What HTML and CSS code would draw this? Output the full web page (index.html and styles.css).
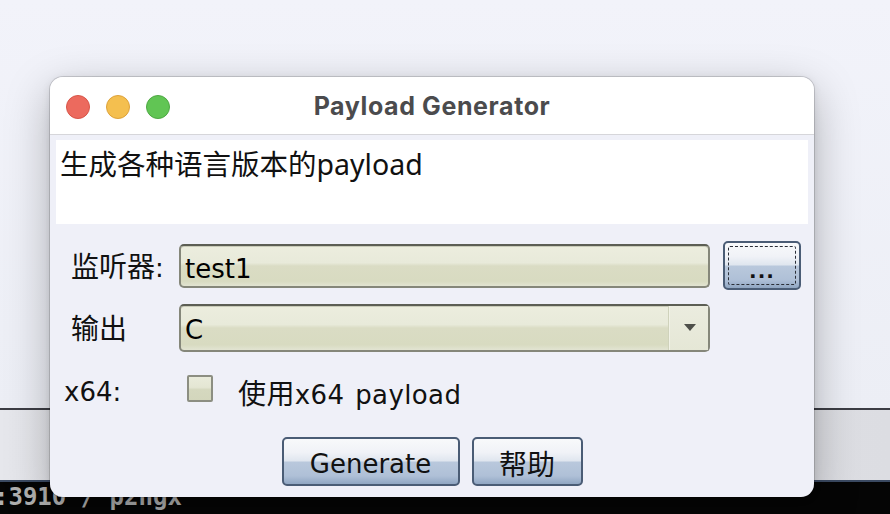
FILE: index.html
```html
<!DOCTYPE html>
<html lang="zh">
<head>
<meta charset="utf-8">
<title>Payload Generator</title>
<link rel="stylesheet" href="styles.css">
</head>
<body>
<div class="screen">
  <div class="desktop"></div>
  <div class="behind"></div>
  <div class="term"><span class="term-text">:3910 / p2ngx</span></div>

  <div class="dialog">
    <div class="titlebar">
      <div class="lights">
        <span class="light red"></span>
        <span class="light yellow"></span>
        <span class="light green"></span>
      </div>
      <div class="title">Payload Generator</div>
      <div></div>
    </div>
    <div class="content">
      <div class="desc">生成各种语言版本的payload</div>
      <div class="form">
        <div class="row row-listener">
          <span class="lbl"><span class="cjk">监听器</span>:</span>
          <div class="field text-field">test1</div>
          <button class="btn dots">...</button>
        </div>
        <div class="row row-output">
          <span class="lbl"><span class="cjk">输出</span></span>
          <div class="field combo">
            <span class="combo-value">C</span>
            <span class="combo-arrow"><span class="tri"></span></span>
          </div>
        </div>
        <div class="row row-x64">
          <span class="lbl-x64">x64:</span>
          <span class="check"></span>
          <span class="check-text"><span class="cjk">使用</span>x64 payload</span>
        </div>
        <div class="buttons">
          <button class="btn action gen">Generate</button>
          <button class="btn action help"><span class="cjk">帮助</span></button>
        </div>
      </div>
    </div>
  </div>
</div>
</body>
</html>
```

FILE: styles.css
```css
html, body {
  margin: 0;
  padding: 0;
}
body {
  width: 890px;
  height: 514px;
  overflow: hidden;
  font-family: "DejaVu Sans", "Noto Sans CJK SC", sans-serif;
}
.screen {
  position: relative;
  width: 890px;
  height: 514px;
  overflow: hidden;
  background: #f1f2f9;
}
.desktop {
  height: 408px;
  background: linear-gradient(to bottom, #f2f3fa 0%, #eceef5 100%);
}
.behind {
  height: 70px;
  border-top: 2px solid #3c3d44;
  border-bottom: 2px solid #3b4a62;
  background: linear-gradient(to right, #e6e7ec 0%, #dcdde2 100%);
}
.term {
  height: 32px;
  background: #050505;
  overflow: hidden;
}
.term-text {
  display: block;
  margin-left: -6px;
  font-family: "DejaVu Sans Mono", monospace;
  font-weight: bold;
  font-size: 24px;
  line-height: 30px;
  color: #b0b0b0;
  white-space: nowrap;
}

/* dialog window */
.dialog {
  position: absolute;
  left: 50px;
  top: 77px;
  width: 764px;
  height: 420px;
  border-radius: 13px;
  background: #eff0f8;
  overflow: hidden;
  box-shadow: 0 0 0 1px rgba(0, 0, 0, 0.14), 0 14px 45px rgba(0, 0, 0, 0.28), 0 2px 8px rgba(0, 0, 0, 0.10);
}
.titlebar {
  height: 57px;
  background: #ffffff;
  border-bottom: 1px solid #d6d6da;
  display: grid;
  grid-template-columns: 1fr auto 1fr;
  align-items: center;
}
.lights {
  display: flex;
  gap: 16px;
  padding-left: 16px;
  padding-top: 2px;
}
.light {
  width: 24px;
  height: 24px;
  border-radius: 50%;
  box-sizing: border-box;
}
.red { background: #ec6a5e; border: 1px solid #d85548; }
.yellow { background: #f4bf4f; border: 1px solid #dea23a; }
.green { background: #61c554; border: 1px solid #4ea843; }
.title {
  font-family: Inter, "DejaVu Sans", sans-serif;
  font-weight: 700;
  font-size: 25px;
  letter-spacing: 0.6px;
  color: #4b4b4d;
  padding-top: 1px;
}

.content {
  padding: 5px 6px 0 6px;
}
.desc {
  height: 84px;
  box-sizing: border-box;
  background: #ffffff;
  padding: 6px 0 0 4px;
  font-family: "Noto Sans", "Noto Sans CJK SC", sans-serif;
  font-size: 28.5px;
  line-height: 36px;
  color: #111;
}

.form {
  display: flex;
  flex-direction: column;
}
.row {
  display: flex;
  align-items: center;
  font-size: 26px;
  color: #111;
}
.cjk {
  font-family: "Noto Sans CJK SC", sans-serif;
  font-size: 28px;
}
.row-listener {
  margin-top: 17px;
  height: 49px;
  padding-left: 15px;
}
.row-output {
  margin-top: 13px;
  height: 49px;
  padding-left: 15px;
}
.lbl {
  width: 108px;
  flex: none;
  padding-top: 2px;
  line-height: 36px;
}

.field {
  box-sizing: border-box;
  border: 2px solid #85877a;
  border-top-color: #5c5e54;
  border-radius: 5px;
  background: linear-gradient(to bottom, #ecedde 0%, #e8eada 42%, #dadcc4 50%, #d8dbc1 88%, #e2e4d2 100%);
  box-shadow: inset 0 1px 0 #c9cbb8;
  display: flex;
  align-items: center;
}
.text-field {
  width: 531px;
  height: 44px;
  padding: 7px 0 0 4px;
  color: #000;
}
.dots {
  margin-left: 13px;
  width: 78px;
  height: 49px;
}
.combo {
  width: 531px;
  height: 48px;
  padding: 5px 0 0 4px;
  color: #000;
}
.combo-value {
  flex: 1;
}
.combo-arrow {
  align-self: stretch;
  margin-top: -5px;
  width: 38px;
  border-left: 1px solid #f1f2e6;
  box-shadow: -1px 0 0 #cfd2bb;
  background: linear-gradient(to bottom, #ebecdf 0%, #e5e7d6 100%);
  display: flex;
  align-items: center;
  justify-content: center;
}
.tri {
  width: 0;
  height: 0;
  border-left: 6px solid transparent;
  border-right: 6px solid transparent;
  border-top: 7px solid #4e4f4a;
  margin-left: 2px;
}

.row-x64 {
  margin-top: 23px;
  height: 34px;
  padding-left: 8px;
  align-items: flex-start;
  line-height: 34px;
}
.lbl-x64 {
  width: 123px;
  flex: none;
}
.check {
  width: 26px;
  height: 27px;
  box-sizing: border-box;
  border: 2px solid #8c8e82;
  border-radius: 2px;
  background: linear-gradient(to bottom, #e9ebdb 0%, #e4e6d3 45%, #d5d8bf 55%, #d3d6bc 100%);
  flex: none;
}
.check-text {
  margin-left: 25px;
  letter-spacing: 0.4px;
  word-spacing: 2px;
}

.btn {
  position: relative;
  box-sizing: border-box;
  border: 2px solid #4a5c75;
  border-radius: 5px;
  background: linear-gradient(to bottom, #f8f9fb 0%, #f0f2f7 30%, #e0e6ef 48%, #b9c8dc 52%, #afc0d7 82%, #90a6c2 100%);
  font-family: "DejaVu Sans", "Noto Sans CJK SC", sans-serif;
  color: #111;
  padding: 0;
  display: flex;
  align-items: center;
  justify-content: center;
}
.dots {
  font-weight: bold;
  font-size: 20px;
  padding-top: 11px;
  letter-spacing: 1px;
}
.dots::after {
  content: "";
  position: absolute;
  inset: 3px;
  border: 1px dashed #2b2f38;
  border-radius: 2px;
}
.buttons {
  margin-top: 28px;
  display: flex;
  justify-content: center;
  gap: 12px;
}
.action {
  height: 49px;
  font-size: 26px;
  padding-top: 5px;
}
.help {
  padding-top: 3px;
}
.gen { width: 178px; }
.help { width: 111px; }
```
